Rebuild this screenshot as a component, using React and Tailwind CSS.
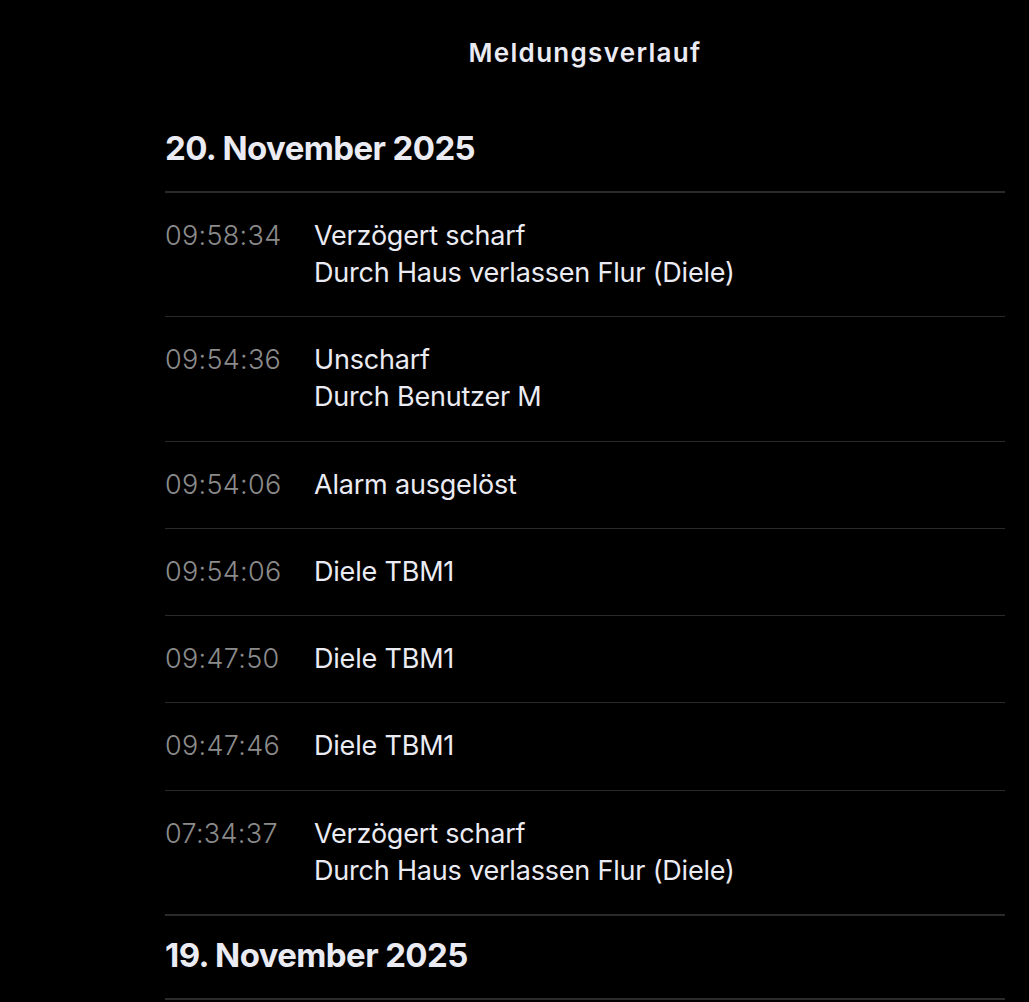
import React from "react";

const days = [
  {
    date: "20. November 2025",
    events: [
      { time: "09:58:34", lines: ["Verzögert scharf", "Durch Haus verlassen Flur (Diele)"] },
      { time: "09:54:36", lines: ["Unscharf", "Durch Benutzer M"] },
      { time: "09:54:06", lines: ["Alarm ausgelöst"] },
      { time: "09:54:06", lines: ["Diele TBM1"] },
      { time: "09:47:50", lines: ["Diele TBM1"] },
      { time: "09:47:46", lines: ["Diele TBM1"] },
      { time: "07:34:37", lines: ["Verzögert scharf", "Durch Haus verlassen Flur (Diele)"] },
    ],
  },
  { date: "19. November 2025", events: [] },
];

export default function App() {
  return (
    <div
      className="min-h-screen bg-black text-[#ebebf3] overflow-hidden"
      style={{ fontFamily: "Inter, 'Noto Sans', sans-serif" }}
    >
      <div className="ml-[165px] w-[840px]">
        {/* Header */}
        <h1 className="pt-[35px] h-[109px] text-center text-[26px] leading-[36px] font-semibold tracking-[1.3px]">
          Meldungsverlauf
        </h1>

        {days.map((day, d) => (
          <section key={day.date} className={d > 0 ? "border-t-2 border-[#2a2a2a]" : ""}>
            <h2 className="h-[84px] pb-[2px] flex items-center text-[33px] font-bold tracking-[-0.6px] border-b-2 border-[#2a2a2a]">
              {day.date}
            </h2>
            {day.events.map((ev, i) => (
              <div
                key={i}
                className={`flex pt-[24px] pb-[25.3px] text-[27px] leading-[37px] tracking-[-0.2px] ${
                  i > 0 ? "border-t border-[#2a2a2a]" : ""
                }`}
              >
                <div className="w-[149px] shrink-0 text-[#8b8b8b] font-light tracking-[0.3px]">{ev.time}</div>
                <div className="font-normal">
                  {ev.lines.map((l) => (
                    <div key={l}>{l}</div>
                  ))}
                </div>
              </div>
            ))}
          </section>
        ))}
      </div>
    </div>
  );
}
